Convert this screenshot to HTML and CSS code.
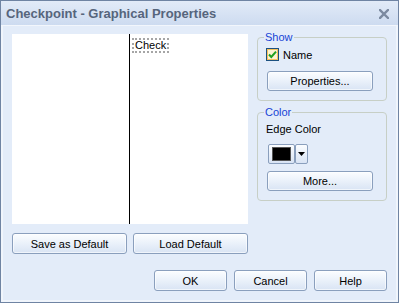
FILE: index.html
```html
<!DOCTYPE html>
<html lang="en">
<head>
    <meta charset="UTF-8">
    <title>Checkpoint - Graphical Properties</title>
    <link rel="stylesheet" href="styles.css">
</head>
<body>

<div class="window">
    <div class="titlebar">
        <span class="title">Checkpoint - Graphical Properties</span>
        <span class="close">
            <svg width="10" height="10" viewBox="0 0 10 10">
                <path d="M1 1 L9 9 M9 1 L1 9" stroke="#7c8aa0" stroke-width="2.4" stroke-linecap="square"/>
            </svg>
        </span>
    </div>

    <div class="content">
        <div class="main">
            <!-- apercu + boutons par defaut -->
            <div class="left">
                <div class="canvas">
                    <div class="edge"></div>
                    <div class="nodeLabel">Check</div>
                </div>
                <div class="row">
                    <button class="btn wide">Save as Default</button>
                    <button class="btn wide">Load Default</button>
                </div>
            </div>

            <div class="right">
                <div class="group show">
                    <span class="groupLabel">Show</span>
                    <label class="check">
                        <svg width="13" height="13" viewBox="0 0 13 13">
                            <rect x="0.5" y="0.5" width="12" height="12" fill="#f6c25a" stroke="#1c5180"/>
                            <rect x="2" y="2" width="9" height="9" fill="#fdf3d2"/>
                            <path d="M3 6.5 L5.3 9 L10 3.6" fill="none" stroke="#21a121" stroke-width="2"/>
                        </svg>
                        Name
                    </label>
                    <button class="btn side">Properties...</button>
                </div>

                <div class="group color">
                    <span class="groupLabel">Color</span>
                    <div class="fieldName">Edge Color</div>
                    <div class="picker">
                        <span class="swatch"><span class="swatchFill"></span></span>
                        <span class="arrow">
                            <svg width="7" height="4" viewBox="0 0 7 4"><path d="M0 0 H7 L3.5 4 Z" fill="#000"/></svg>
                        </span>
                    </div>
                    <button class="btn side">More...</button>
                </div>
            </div>
        </div>

        <div class="footer">
            <button class="btn foot">OK</button>
            <button class="btn foot">Cancel</button>
            <button class="btn foot">Help</button>
        </div>
    </div>
</div>

</body>
</html>
```

FILE: styles.css
```css
body {
    margin: 0;
    font-family: "Liberation Sans", Arial, sans-serif;
    font-size: 11px;
    color: #000;
}

.window {
    width: 399px;
    height: 303px;
    box-sizing: border-box;
    border: 1px solid #6f84a3;
    background-color: #e3ecf9;
    box-shadow: inset 2px 0 0 #f0f5fc, inset -2px 0 0 #f0f5fc, inset 0 -2px 0 #f0f5fc;
}

/* barre de titre */
.titlebar {
    height: 24px;
    border-bottom: 1px solid #f2f6fc;
    background: linear-gradient(#e2ebf8, #cddbf0);
    display: flex;
    align-items: center;
    justify-content: space-between;
    padding: 0 9px 0 5px;
}

.title {
    font-family: "Liberation Sans", Arial, sans-serif;
    font-weight: bold;
    font-size: 13px;
    color: #56657c;
    padding-top: 1px;
}

.close {
    display: flex;
    margin-top: 2px;
}

.content {
    padding: 8px 11px 0 11px;
}

.main {
    display: flex;
    gap: 9px;
}

.canvas {
    position: relative;
    width: 236px;
    height: 190px;
    background-color: #fff;
}

.edge {
    position: absolute;
    left: 117px;
    top: 0;
    width: 1px;
    height: 100%;
    background-color: #000;
}

.nodeLabel {
    position: absolute;
    left: 120px;
    top: 4px;
    line-height: 11px;
    padding: 0 1px;
    border: 2px dotted #a6a6a6;
}

.row {
    display: flex;
    gap: 6px;
    margin-top: 9px;
}

/* boutons */
.btn {
    font-family: "Liberation Sans", Arial, sans-serif;
    font-size: 11px;
    color: #000;
    padding: 0;
    height: 21px;
    border: 1px solid #8a9fbd;
    border-radius: 3px;
    background: linear-gradient(#fbfdff, #eaf1fa 50%, #d9e4f4);
    box-shadow: inset 0 0 0 1px rgba(255, 255, 255, 0.6);
}

.wide {
    width: 115px;
}

.side {
    display: block;
    width: 106px;
    height: 20px;
    margin-left: 9px;
}

.right {
    width: 130px;
    margin-top: 3px;
}

.group {
    position: relative;
    box-sizing: border-box;
    border: 1px solid #c7cfc6;
    border-radius: 4px;
}

.groupLabel {
    position: absolute;
    left: 6px;
    top: -7px;
    line-height: 12px;
    padding: 0 1px;
    color: #1744d6;
    background-color: #e3ecf9;
}

.show {
    height: 64px;
    padding-top: 10px;
}

.check {
    display: flex;
    align-items: center;
    gap: 4px;
    height: 13px;
    margin-left: 8px;
    margin-bottom: 10px;
}

.color {
    height: 89px;
    margin-top: 11px;
    padding-top: 10px;
}

.fieldName {
    line-height: 13px;
    margin-left: 8px;
}

.picker {
    display: flex;
    margin: 8px 0 7px 10px;
}

.swatch {
    box-sizing: border-box;
    width: 27px;
    height: 20px;
    border: 1px solid #8a9fbd;
    border-radius: 2px;
    padding: 2px 3px;
    background: linear-gradient(#fbfdff, #d9e4f4);
}

.swatchFill {
    display: block;
    height: 100%;
    background-color: #000;
    border: 1px solid #555;
    box-sizing: border-box;
}

.arrow {
    box-sizing: border-box;
    width: 13px;
    height: 20px;
    border: 1px solid #8a9fbd;
    border-radius: 2px;
    background: linear-gradient(#fbfdff, #d9e4f4);
    display: flex;
    align-items: center;
    justify-content: center;
}

.footer {
    display: flex;
    justify-content: flex-end;
    gap: 7px;
    margin-top: 16px;
}

.foot {
    width: 73px;
}
```
